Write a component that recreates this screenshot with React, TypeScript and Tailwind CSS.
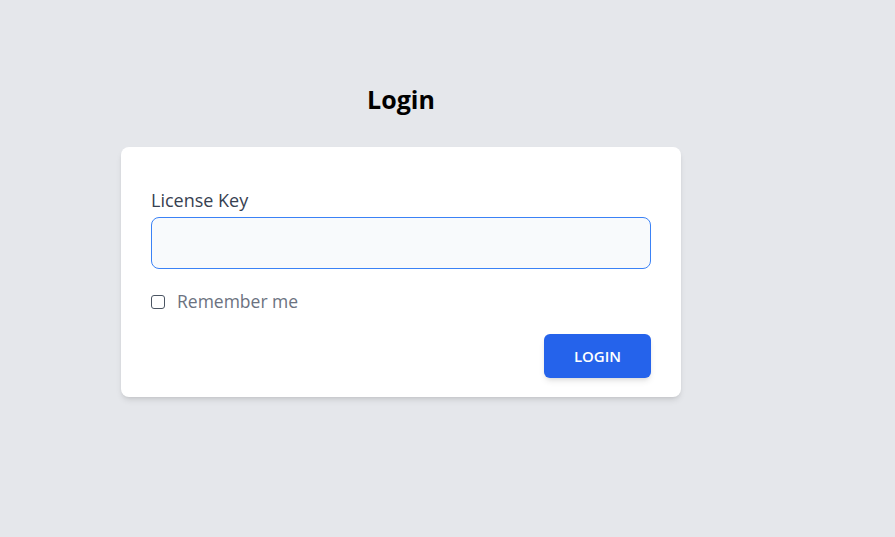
export default function App() {
    return (
        <div className="min-h-screen w-full bg-[#e5e7eb] font-['Open_Sans',sans-serif]">
            <div className="flex flex-col w-[560px] ml-[121px] pt-[79px]">
                {/* Title */}
                <h1 className="text-center text-[25px] leading-[40px] font-bold text-black">Login</h1>

                {/* Card */}
                <div className="mt-[28px] bg-white rounded-lg shadow-md px-[30px] pt-[40px] pb-[19px]">
                    <label className="block text-[18px] leading-[27px] text-[#374151] mb-[3px]">License Key</label>
                    <input
                        type="text"
                        className="block w-full h-[52px] rounded-lg border border-[#3b82f6] bg-[#f8fafc] px-3 outline-none"
                    />

                    <div className="flex items-center mt-[19px]">
                        <span className="w-[14px] h-[14px] rounded-[3px] border border-[#4b5563] bg-white" />
                        <span className="ml-[12px] text-[17.5px] leading-[27px] text-[#6b7280]">Remember me</span>
                    </div>

                    <div className="flex justify-end mt-[19px]">
                        <button className="w-[107px] h-[44px] rounded-md bg-[#2563eb] text-white text-[15px] font-semibold shadow-md">
                            LOGIN
                        </button>
                    </div>
                </div>
            </div>
        </div>
    );
}
